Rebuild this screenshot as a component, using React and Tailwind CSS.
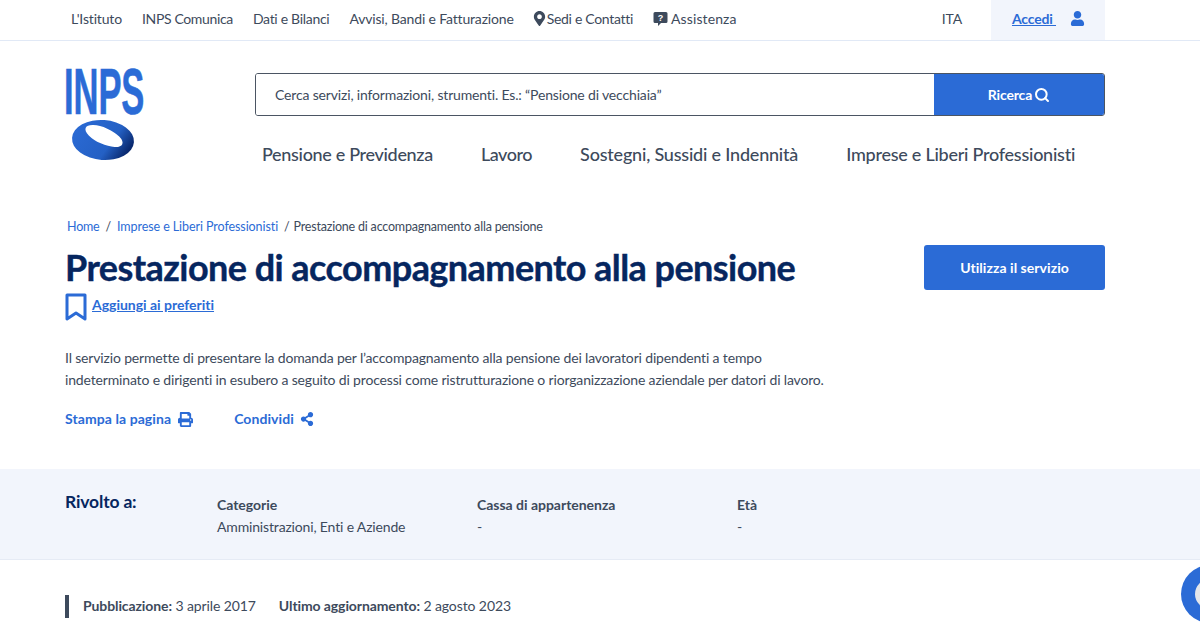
import { FaMapMarkerAlt, FaUser, FaPrint, FaShareAlt } from "react-icons/fa";
import { Search } from "lucide-react";

function Logo() {
  return (
    <svg width="78" height="92" viewBox="0 0 78 92" className="shrink-0 overflow-visible">
      <defs>
        <linearGradient id="ring" x1="0" y1="0.1" x2="1" y2="0.5">
          <stop offset="0" stopColor="#2b6bd6" />
          <stop offset="0.7" stopColor="#2460c4" />
          <stop offset="1" stopColor="#0a2a70" />
        </linearGradient>
      </defs>
      <text transform="translate(-1 45) scale(0.54 1)" fontFamily="Liberation Sans, sans-serif" fontSize="64" fontWeight="700" fill="#2b6bd6" stroke="#2b6bd6" strokeWidth="0.6">
        INPS
      </text>
      <ellipse cx="38" cy="71" rx="31" ry="20" fill="url(#ring)" transform="rotate(4 38 71)" />
      <ellipse cx="39" cy="67" rx="20" ry="8" fill="#fff" transform="rotate(24 39 67)" />
    </svg>
  );
}

function HelpIcon() {
  return (
    <svg width="15" height="16" viewBox="0 0 15 16" className="shrink-0">
      <path d="M2 1h11a1.5 1.5 0 0 1 1.5 1.5v8A1.5 1.5 0 0 1 13 12H8l-3 3v-3H2A1.5 1.5 0 0 1 .5 10.500v-8A1.5 1.5 0 0 1 2 1z" fill="#3d4a5c" />
      <text x="7.500" y="10" textAnchor="middle" fontSize="9" fontWeight="700" fontFamily="Liberation Sans, sans-serif" fill="#fff">?</text>
    </svg>
  );
}

function BookmarkIcon() {
  return (
    <svg width="22" height="28" viewBox="0 0 22 28" fill="none" className="shrink-0">
      <path d="M2 2h18v24l-9-6-9 6z" stroke="#2b6bd6" strokeWidth="3" strokeLinejoin="round" />
    </svg>
  );
}

export default function App() {
  return (
    <div className="relative h-[634px] w-[1200px] overflow-hidden bg-white text-[#3d4a5c] tracking-[-0.16px] font-['Lato','Noto_Sans',sans-serif]">
      {/* top bar */}
      <div className="h-[41px] border-b border-[#e1e9f6]">
        <div className="ml-[65px] flex h-[40px] w-[1040px] items-center pb-[3px] text-[14px]">
          <nav className="flex items-center gap-[20px] pl-[6px]">
            <a>L'Istituto</a>
            <a className="tracking-[-0.35px]">INPS Comunica</a>
            <a className="tracking-[-0.3px]">Dati e Bilanci</a>
            <a>Avvisi, Bandi e Fatturazione</a>
            <a className="-ml-[2px] flex items-center tracking-[-0.3px]">
              <FaMapMarkerAlt className="text-[15px]" />
              Sedi e Contatti
            </a>
            <a className="flex items-center gap-[3px] tracking-[0.1px]">
              <HelpIcon />
              Assistenza
            </a>
          </nav>
          <span className="ml-auto mr-[29px]">ITA</span>
          <div className="-mb-[3px] flex h-[40px] w-[114px] items-center justify-center gap-[14px] bg-[#f2f5fc] pb-[3px] pl-[1px] text-[#2b6bd6]">
            <a className="font-bold underline">Accedi&nbsp;</a>
            <FaUser className="text-[15px]" />
          </div>
        </div>
      </div>

      {/* header */}
      <div className="ml-[65px] flex h-[150px] w-[1040px] pt-[28px]">
        <Logo />
        <div className="ml-[112px] flex-1 pt-[4px]">
          <div className="flex h-[43px] overflow-hidden rounded-[3px] border border-[#4b5563]">
            <div className="flex flex-1 items-center bg-white pl-[19px] text-[14px]">
              Cerca servizi, informazioni, strumenti. Es.: “Pensione di vecchiaia”
            </div>
            <button className="flex w-[170px] items-center justify-center gap-[2px] bg-[#2b6bd6] text-[14px] font-bold text-white">
              Ricerca
              <Search size={16} strokeWidth={3} />
            </button>
          </div>
          <nav className="mt-[26px] flex gap-[48px] pl-[7px] text-[18px] font-medium leading-[24px] tracking-[-0.25px]">
            <a className="tracking-[-0.32px]">Pensione e Previdenza</a>
            <a className="tracking-[-0.45px]">Lavoro</a>
            <a className="tracking-[-0.2px]">Sostegni, Sussidi e Indennità</a>
            <a>Imprese e Liberi Professionisti</a>
          </nav>
        </div>
      </div>

      {/* page heading */}
      <div className="ml-[65px] w-[1040px] pt-[26px]">
        <div className="flex gap-[6px] pl-[2px] text-[12.5px] leading-[20px] tracking-[-0.2px]">
          <a className="text-[#2b6bd6]">Home</a>
          <span>/</span>
          <a className="tracking-[-0.08px] text-[#2b6bd6]">Imprese e Liberi Professionisti</a>
          <span>/</span>
          <span className="-ml-[2px]">Prestazione di accompagnamento alla pensione</span>
        </div>
        <div className="mt-[8px] flex items-start justify-between">
          <h1 className="text-[36px] font-bold leading-[44px] tracking-[-0.55px] text-[#06265f] [-webkit-text-stroke:0.4px_#06265f]">
            Prestazione di accompagnamento alla pensione
          </h1>
          <button className="h-[45px] w-[181px] rounded-[3px] bg-[#2b6bd6] text-[14px] font-bold tracking-[0.05px] text-white">
            Utilizza il servizio
          </button>
        </div>
        <div className="mt-[3px] flex items-start gap-[5px]">
          <BookmarkIcon />
          <a className="mt-[2px] text-[14px] font-bold leading-[20px] tracking-[-0.02px] text-[#2b6bd6] underline">Aggiungi ai preferiti</a>
        </div>
        <p className="mt-[26px] text-[14px] leading-[22px]">
          Il servizio permette di presentare la domanda per l’accompagnamento alla pensione dei lavoratori dipendenti a tempo
          <br />
          indeterminato e dirigenti in esubero a seguito di processi come ristrutturazione o riorganizzazione aziendale per datori di lavoro.
        </p>
        <div className="mt-[17px] flex gap-[41px] text-[14px] font-bold leading-[22px] tracking-[0.08px] text-[#2b6bd6]">
          <a className="flex items-center gap-[7px]">
            Stampa la pagina
            <FaPrint className="text-[15px]" />
          </a>
          <a className="flex items-center gap-[6px]">
            Condividi
            <FaShareAlt className="text-[14px]" />
          </a>
        </div>
      </div>

      {/* rivolto a */}
      <div className="mt-[39px] h-[91px] border-b border-[#e6ebf5] bg-[#f2f5fc]">
        <div className="ml-[65px] flex w-[1040px] pt-[22px] text-[14px] leading-[22px]">
          <h2 className="w-[152px] text-[17.5px] font-bold text-[#06265f]">Rivolto a:</h2>
          <div className="w-[260px] pt-[3px]">
            <div className="font-bold tracking-[-0.02px]">Categorie</div>
            <div>Amministrazioni, Enti e Aziende</div>
          </div>
          <div className="w-[260px] pt-[3px]">
            <div className="font-bold tracking-[-0.02px]">Cassa di appartenenza</div>
            <div>-</div>
          </div>
          <div className="pt-[3px]">
            <div className="font-bold tracking-[-0.02px]">Età</div>
            <div>-</div>
          </div>
        </div>
      </div>

      {/* date */}
      <div className="ml-[65px] mt-[35px] flex h-[23px] items-center gap-[23px] border-l-[4px] border-[#3d4a5c] pb-[2px] pl-[14px] text-[14px] tracking-[-0.1px]">
        <span>
          <b>Pubblicazione:</b> 3 aprile 2017
        </span>
        <span>
          <b>Ultimo aggiornamento:</b> 2 agosto 2023
        </span>
      </div>

      {/* chat bubble */}
      <div className="absolute left-[1181px] top-[565px] flex h-[58px] w-[58px] items-center justify-center rounded-full bg-[#2b6bd6]">
        <div className="h-[30px] w-[30px] rounded-full bg-[#e4e6ea]" />
      </div>
    </div>
  );
}
